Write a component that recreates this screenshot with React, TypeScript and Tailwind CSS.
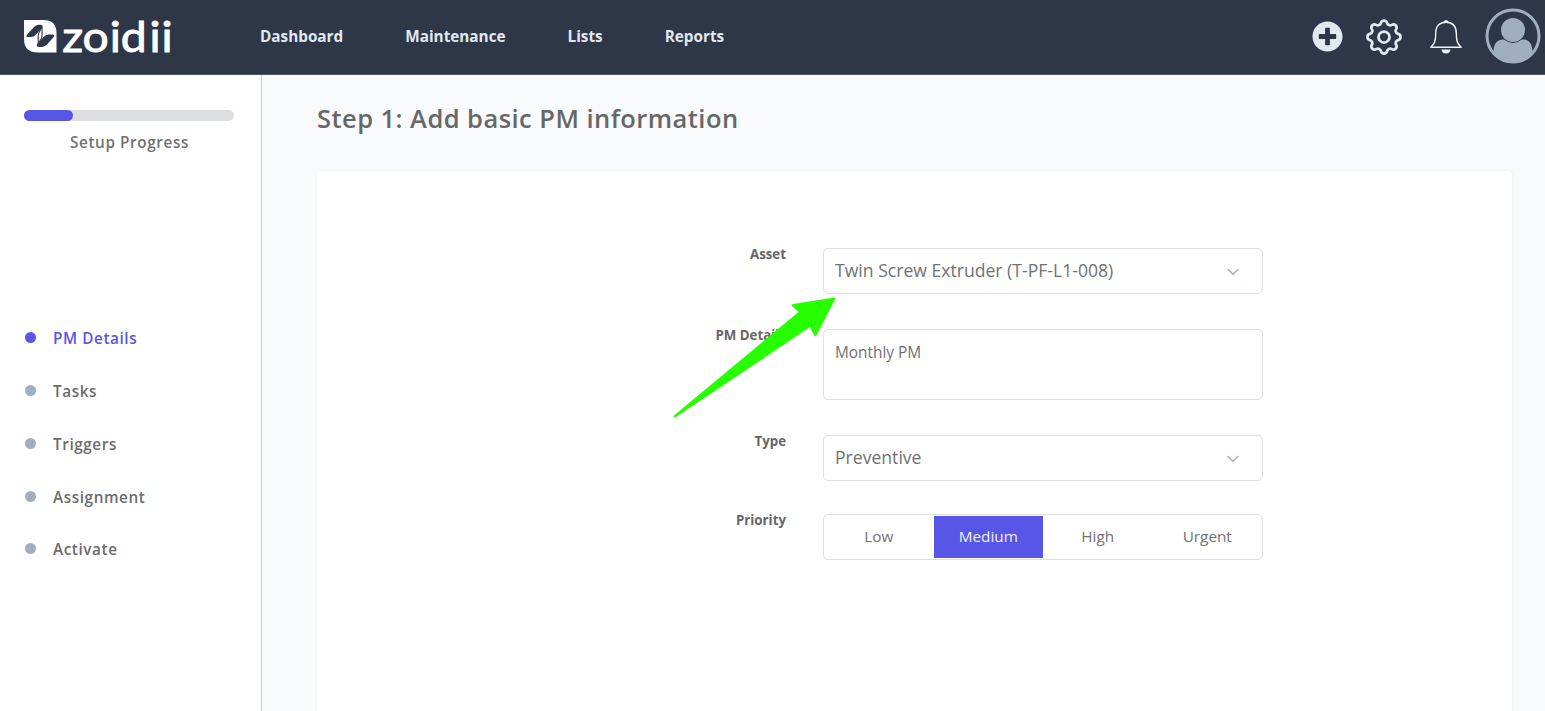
import React from "react";
import { HiOutlineCog } from "react-icons/hi";
import { FaPlusCircle } from "react-icons/fa";

const steps = ["PM Details", "Tasks", "Triggers", "Assignment", "Activate"];
const priorities = ["Low", "Medium", "High", "Urgent"];

function Logo() {
  return (
    <svg width="160" height="74" viewBox="24 0 160 74" className="block">
      <path d="M24 20H43Q56.500 20 56.500 33V52.500H38Q24 52.500 24 39Z" fill="#fff" />
      <path d="M27 34.800L33.500 27.500Q36 24.800 38.500 24.800H40.500Q43.500 24.800 42.200 27.500L36 34.500Q33.800 37 31 37H27.800Q25.300 37 27 34.800Z" fill="#2d3748" />
      <path d="M53.700 36.900L47.200 44.200Q44.700 46.900 42.200 46.900H39.200Q35.700 46.900 37.200 44.200L43.500 37Q45.700 34.500 48.500 34.500H52.500Q55.400 34.500 53.700 36.900Z" fill="#2d3748" />
      <path d="M41.500 27.500C40.500 31 38.300 31.500 38.200 36V44.500" fill="none" stroke="#2d3748" strokeWidth="1.100" />
      <path d="M42 26.500V36C42 39 40 40 38.500 43.500" fill="none" stroke="#2d3748" strokeWidth="1.100" />
      <text transform="scale(1.100 1)" x="56.600 75 99.800 109.700 136 146.900" y="52" fontSize="42" fill="#fff" stroke="#fff" strokeWidth="0.900" fontFamily="Lato, sans-serif">zoidii</text>
    </svg>
  );
}

function Bell() {
  return (
    <svg width="34" height="36" viewBox="0 0 34 36" className="mr-[22px]">
      <path d="M1.800 28.300C5.500 25 6.700 22 6.700 14.500C6.700 7 10.500 3.300 17 3.300S27.300 7 27.300 14.500C27.300 22 28.500 25 32.200 28.300Z" fill="none" stroke="#edf2f7" strokeWidth="1.400" strokeLinejoin="round" />
      <path d="M14.600 3.300Q15 1.500 17 1.500T19.400 3.300Z" fill="#edf2f7" stroke="#edf2f7" strokeWidth="0.800" />
      <path d="M12.500 30.500H21.500Q21 34.500 17 34.500T12.500 30.500Z" fill="#edf2f7" />
    </svg>
  );
}

function Avatar() {
  return (
    <svg width="56" height="56" viewBox="0 0 56 56" className="-mt-px">
      <circle cx="28" cy="28" r="26" fill="none" stroke="#a0aec0" strokeWidth="3" />
      <path d="M8.500 44.500V43.500C8.500 35 13 31 19 31.500Q28 38.500 37 31.500C43 31 47.500 35 47.500 43.500V44.500A26 26 0 0 1 8.500 44.500Z" fill="#a0aec0" />
      <circle cx="28" cy="22" r="12" fill="#a0aec0" />
    </svg>
  );
}

function Chevron() {
  return (
    <svg width="12" height="8" viewBox="0 0 12 8" fill="none" stroke="#a9b4c2" strokeWidth="1.700" className="mt-px">
      <path d="M0.700 1L6 6.300L11.300 1" />
    </svg>
  );
}

function Field({ label, className, children }: { label: string; className: string; children: React.ReactNode }) {
  return (
    <div className={`flex ${className}`}>
      <div className="w-[469px] shrink-0 text-right text-[13.300px] leading-[13px] font-bold text-[#666]">{label}</div>
      <div className="ml-[37px] w-[440px]">{children}</div>
    </div>
  );
}

function Select({ value }: { value: string }) {
  return (
    <div className="flex h-[46px] items-center justify-between rounded-[5px] border border-[#dfdfdf] bg-white pr-[23px] pl-[11px] text-[17.600px] text-[#707172]">
      <span className="pb-[2px]">{value}</span>
      <Chevron />
    </div>
  );
}

export default function App() {
  return (
    <div className="flex h-[711px] w-[1545px] flex-col overflow-hidden bg-[#f9fafc] font-['Open_Sans',sans-serif]">
      <header className="flex h-[75px] shrink-0 items-center border-b border-[#4e5766] bg-[#2d3748] pl-6">
        <div className="w-[236px]"><Logo /></div>
        <nav className="flex gap-[62px] pb-[2px] text-[15.300px] font-bold text-[#e2e8f0]">
          <a>Dashboard</a><a>Maintenance</a><a>Lists</a><a>Reports</a>
        </nav>
        <div className="ml-auto flex items-center pr-1 pb-px">
          <FaPlusCircle className="mr-[19px] h-[31px] w-[31px] text-[#e2e8f0]" />
          <HiOutlineCog className="mr-[23px] h-[44px] w-[44px] text-[#e2e8f0] [&_path]:[stroke-width:1.500]" />
          <Bell />
          <Avatar />
        </div>
      </header>
      <div className="flex min-h-0 flex-1">
        <aside className="w-[262px] shrink-0 border-r border-[#cbcccd] bg-white px-6 pt-[35px]">
          <div className="h-[11px] w-[210px] rounded-full bg-[#dddedf]">
            <div className="h-full w-[49px] rounded-full bg-[#5856e6]" />
          </div>
          <div className="mt-[10px] w-[211px] text-center text-[15.300px] leading-[22px] font-semibold tracking-[0.600px] text-[#707172]">Setup Progress</div>
          <ul className="mt-[174px] flex flex-col gap-[30.850px]">
            {steps.map((s, i) => (
              <li key={s} className={`flex h-[22px] items-center gap-[17px] text-[15.300px] leading-[22px] font-semibold tracking-[0.580px] ${i === 0 ? "text-[#5856e6]" : "text-[#6b6c6d]"}`}>
                <span className={`mb-px ml-[1px] h-[11px] w-[11px] rounded-full ${i === 0 ? "bg-[#5856e6]" : "bg-[#a0aec0]"}`} />
                <span>{s}</span>
              </li>
            ))}
          </ul>
        </aside>
        <main className="flex flex-1 flex-col pr-[33px] pl-[55px]">
          <h1 className="pt-[25px] text-[25.500px] leading-[36px] font-semibold tracking-[0.450px] text-[#666768]">Step 1: Add basic PM information</h1>
          <section className="relative mt-[35px] flex-1 rounded-t-[4px] bg-white pt-[77px] shadow-[0_0_3px_rgba(0,0,0,0.06)]">
            <Field label="Asset" className="h-[81px]"><Select value="Twin Screw Extruder (T-PF-L1-008)" /></Field>
            <Field label="PM Details" className="h-[106px]">
              <div className="h-[71px] rounded-[5px] border border-[#dfdfdf] px-[11px] pt-[11px] text-[15.400px] leading-[24px] text-[#707172]">Monthly PM</div>
            </Field>
            <Field label="Type" className="h-[79px]"><Select value="Preventive" /></Field>
            <Field label="Priority" className="h-[46px]">
              <div className="grid h-[46px] grid-cols-4 rounded-[5px] border border-[#dfdfdf] py-px text-[15.300px]">
                {priorities.map((p) => (
                  <span key={p} className={`flex items-center justify-center pb-[2px] ${p === "Medium" ? "bg-[#5856e6] text-[#f0f0ff]" : "text-[#707172]"}`}>{p}</span>
                ))}
              </div>
            </Field>
            <svg className="absolute top-[126px] left-[356px]" width="164" height="122" viewBox="0 0 164 122">
              <path d="M161.500 0.500Q163 1 162 2.500L143.500 38Q142 40.500 141 38L137 30L3 120Q1.500 121 0.800 120Q0.500 119 1.500 118L125.500 15L119 9Q118 7.500 120 7Z" fill="#26ff00" />
            </svg>
          </section>
        </main>
      </div>
    </div>
  );
}
